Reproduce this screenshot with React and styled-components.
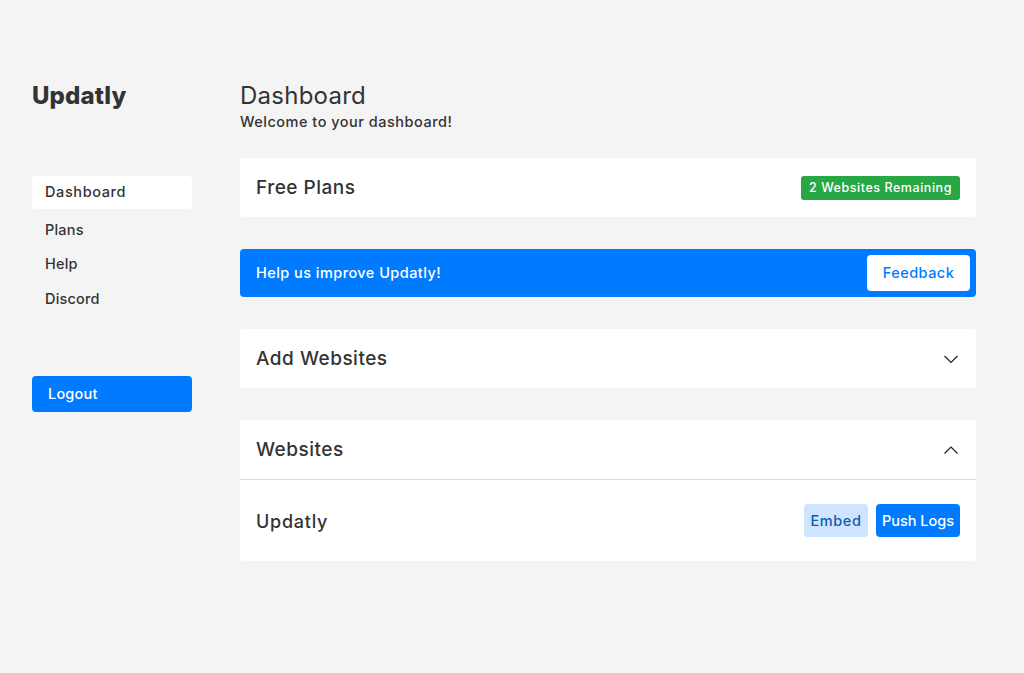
import React from "react";
import styled, { createGlobalStyle } from "styled-components";

const GlobalStyle = createGlobalStyle`
  html, body {
    margin: 0;
    padding: 0;
    background: #f4f4f4;
  }
  body {
    font-family: Inter, "Open Sans", sans-serif;
    color: #333;
  }
`;

const Page = styled.div`
  display: flex;
  align-items: flex-start;
  box-sizing: border-box;
  min-height: 673px;
  padding: 80px 48px 0 32px;
`;

const Sidebar = styled.aside`
  display: flex;
  flex-direction: column;
  flex: 0 0 160px;
  margin-right: 48px;
`;

const Brand = styled.h1`
  margin: 0 0 64px;
  font-size: 24px;
  line-height: 32px;
  font-weight: 800;
  letter-spacing: 0.15px;
  color: #333;
`;

const Nav = styled.nav`
  display: flex;
  flex-direction: column;
  margin-bottom: 60px;
`;

const NavItem = styled.a`
  display: block;
  height: 33px;
  line-height: 32px;
  margin-bottom: ${(p) => p.$gap}px;
  padding-left: 13px;
  border-radius: 4px;
  background: ${(p) => (p.$active ? "#fff" : "transparent")};
  font-size: 14.5px;
  font-weight: 450;
  letter-spacing: ${(p) => p.$track || 0.2}px;
  color: #333;
`;

const Logout = styled.button`
  height: 36px;
  padding: 0 16px;
  border: 0;
  border-radius: 4px;
  background: #007bff;
  color: #fff;
  font: 450 14.5px Inter, sans-serif;
  letter-spacing: 0.2px;
  text-align: left;
`;

const Main = styled.main`
  display: flex;
  flex-direction: column;
  flex: 1;
`;

const Heading = styled.h2`
  margin: 0;
  font-size: 24px;
  line-height: 32px;
  font-weight: 400;
  letter-spacing: 0.25px;
  color: #333;
`;

const Subheading = styled.p`
  margin: 0 0 26px;
  font-size: 14.5px;
  line-height: 20px;
  font-weight: 450;
  letter-spacing: 0.5px;
  color: #333;
`;

const Card = styled.section`
  margin-bottom: 32px;
  border-radius: 4px;
  background: #fff;
`;

const CardHeader = styled.div`
  display: flex;
  align-items: center;
  justify-content: space-between;
  box-sizing: border-box;
  height: ${(p) => (p.$divided ? "60px" : "59px")};
  padding: 0 16px;
  border-bottom: ${(p) => (p.$divided ? "1px solid #dcdcdc" : "0")};
`;

const CardTitle = styled.h3`
  margin: 0;
  font-size: 19px;
  font-weight: 450;
  letter-spacing: 0.5px;
  color: #333;
`;

const Badge = styled.span`
  display: flex;
  align-items: center;
  justify-content: center;
  width: 159px;
  height: 24px;
  border-radius: 3px;
  background: #28a745;
  color: #fff;
  font-size: 12.5px;
  font-weight: 450;
  letter-spacing: 0.55px;
`;

const Banner = styled.div`
  display: flex;
  align-items: center;
  justify-content: space-between;
  box-sizing: border-box;
  height: 48px;
  margin-bottom: 32px;
  padding: 0 6px 0 16px;
  border-radius: 4px;
  background: #007bff;
  color: #fff;
  font-size: 14.5px;
  font-weight: 450;
  letter-spacing: 0.45px;
`;

const BannerText = styled.span`
  padding-bottom: 2px;
`;

const FeedbackButton = styled.button`
  width: 103px;
  height: 36px;
  padding: 0 0 2px;
  border: 0;
  border-radius: 4px;
  background: #fff;
  color: #007bff;
  font: 450 14.5px Inter, sans-serif;
  letter-spacing: 0.45px;
`;

const Row = styled.div`
  display: flex;
  align-items: center;
  justify-content: space-between;
  height: 81px;
  padding: 0 16px;
`;

const RowName = styled.span`
  padding-top: 1px;
  font-size: 18px;
  font-weight: 450;
  letter-spacing: 0.75px;
  color: #333;
`;

const Actions = styled.div`
  display: flex;
  gap: 8px;
`;

const ActionButton = styled.button`
  height: 33px;
  padding: 0;
  width: ${(p) => (p.$primary ? "84px" : "64px")};
  border: 0;
  border-radius: 4px;
  background: ${(p) => (p.$primary ? "#007bff" : "#cfe5ff")};
  color: ${(p) => (p.$primary ? "#fff" : "#0f5cad")};
  font: 450 14.5px Inter, sans-serif;
  letter-spacing: ${(p) => (p.$primary ? 0 : 0.6)}px;
`;

const ChevronIcon = styled.svg`
  margin-right: 1px;
`;

const Chevron = ({ up }) => (
  <ChevronIcon width="16" height="16" viewBox="0 0 16 16" fill="none" stroke="#222" strokeWidth="1.2">
    <path d={up ? "M1.5 11.5 8 5l6.5 6.5" : "M1.5 5 8 11.5 14.5 5"} />
  </ChevronIcon>
);

export default function App() {
  return (
    <>
      <GlobalStyle />
      <Page>
        <Sidebar>
          <Brand>Updatly</Brand>
          <Nav>
            <NavItem $active $track={0.6} $gap={4.5}>Dashboard</NavItem>
            <NavItem $gap={1}>Plans</NavItem>
            <NavItem $gap={2}>Help</NavItem>
            <NavItem $gap={0}>Discord</NavItem>
          </Nav>
          <Logout>Logout</Logout>
        </Sidebar>
        <Main>
          <Heading>Dashboard</Heading>
          <Subheading>Welcome to your dashboard!</Subheading>
          <Card>
            <CardHeader>
              <CardTitle>Free Plans</CardTitle>
              <Badge>2 Websites Remaining</Badge>
            </CardHeader>
          </Card>
          <Banner>
            <BannerText>Help us improve Updatly!</BannerText>
            <FeedbackButton>Feedback</FeedbackButton>
          </Banner>
          <Card>
            <CardHeader>
              <CardTitle>Add Websites</CardTitle>
              <Chevron />
            </CardHeader>
          </Card>
          <Card>
            <CardHeader $divided>
              <CardTitle>Websites</CardTitle>
              <Chevron up />
            </CardHeader>
            <Row>
              <RowName>Updatly</RowName>
              <Actions>
                <ActionButton>Embed</ActionButton>
                <ActionButton $primary>Push Logs</ActionButton>
              </Actions>
            </Row>
          </Card>
        </Main>
      </Page>
    </>
  );
}
